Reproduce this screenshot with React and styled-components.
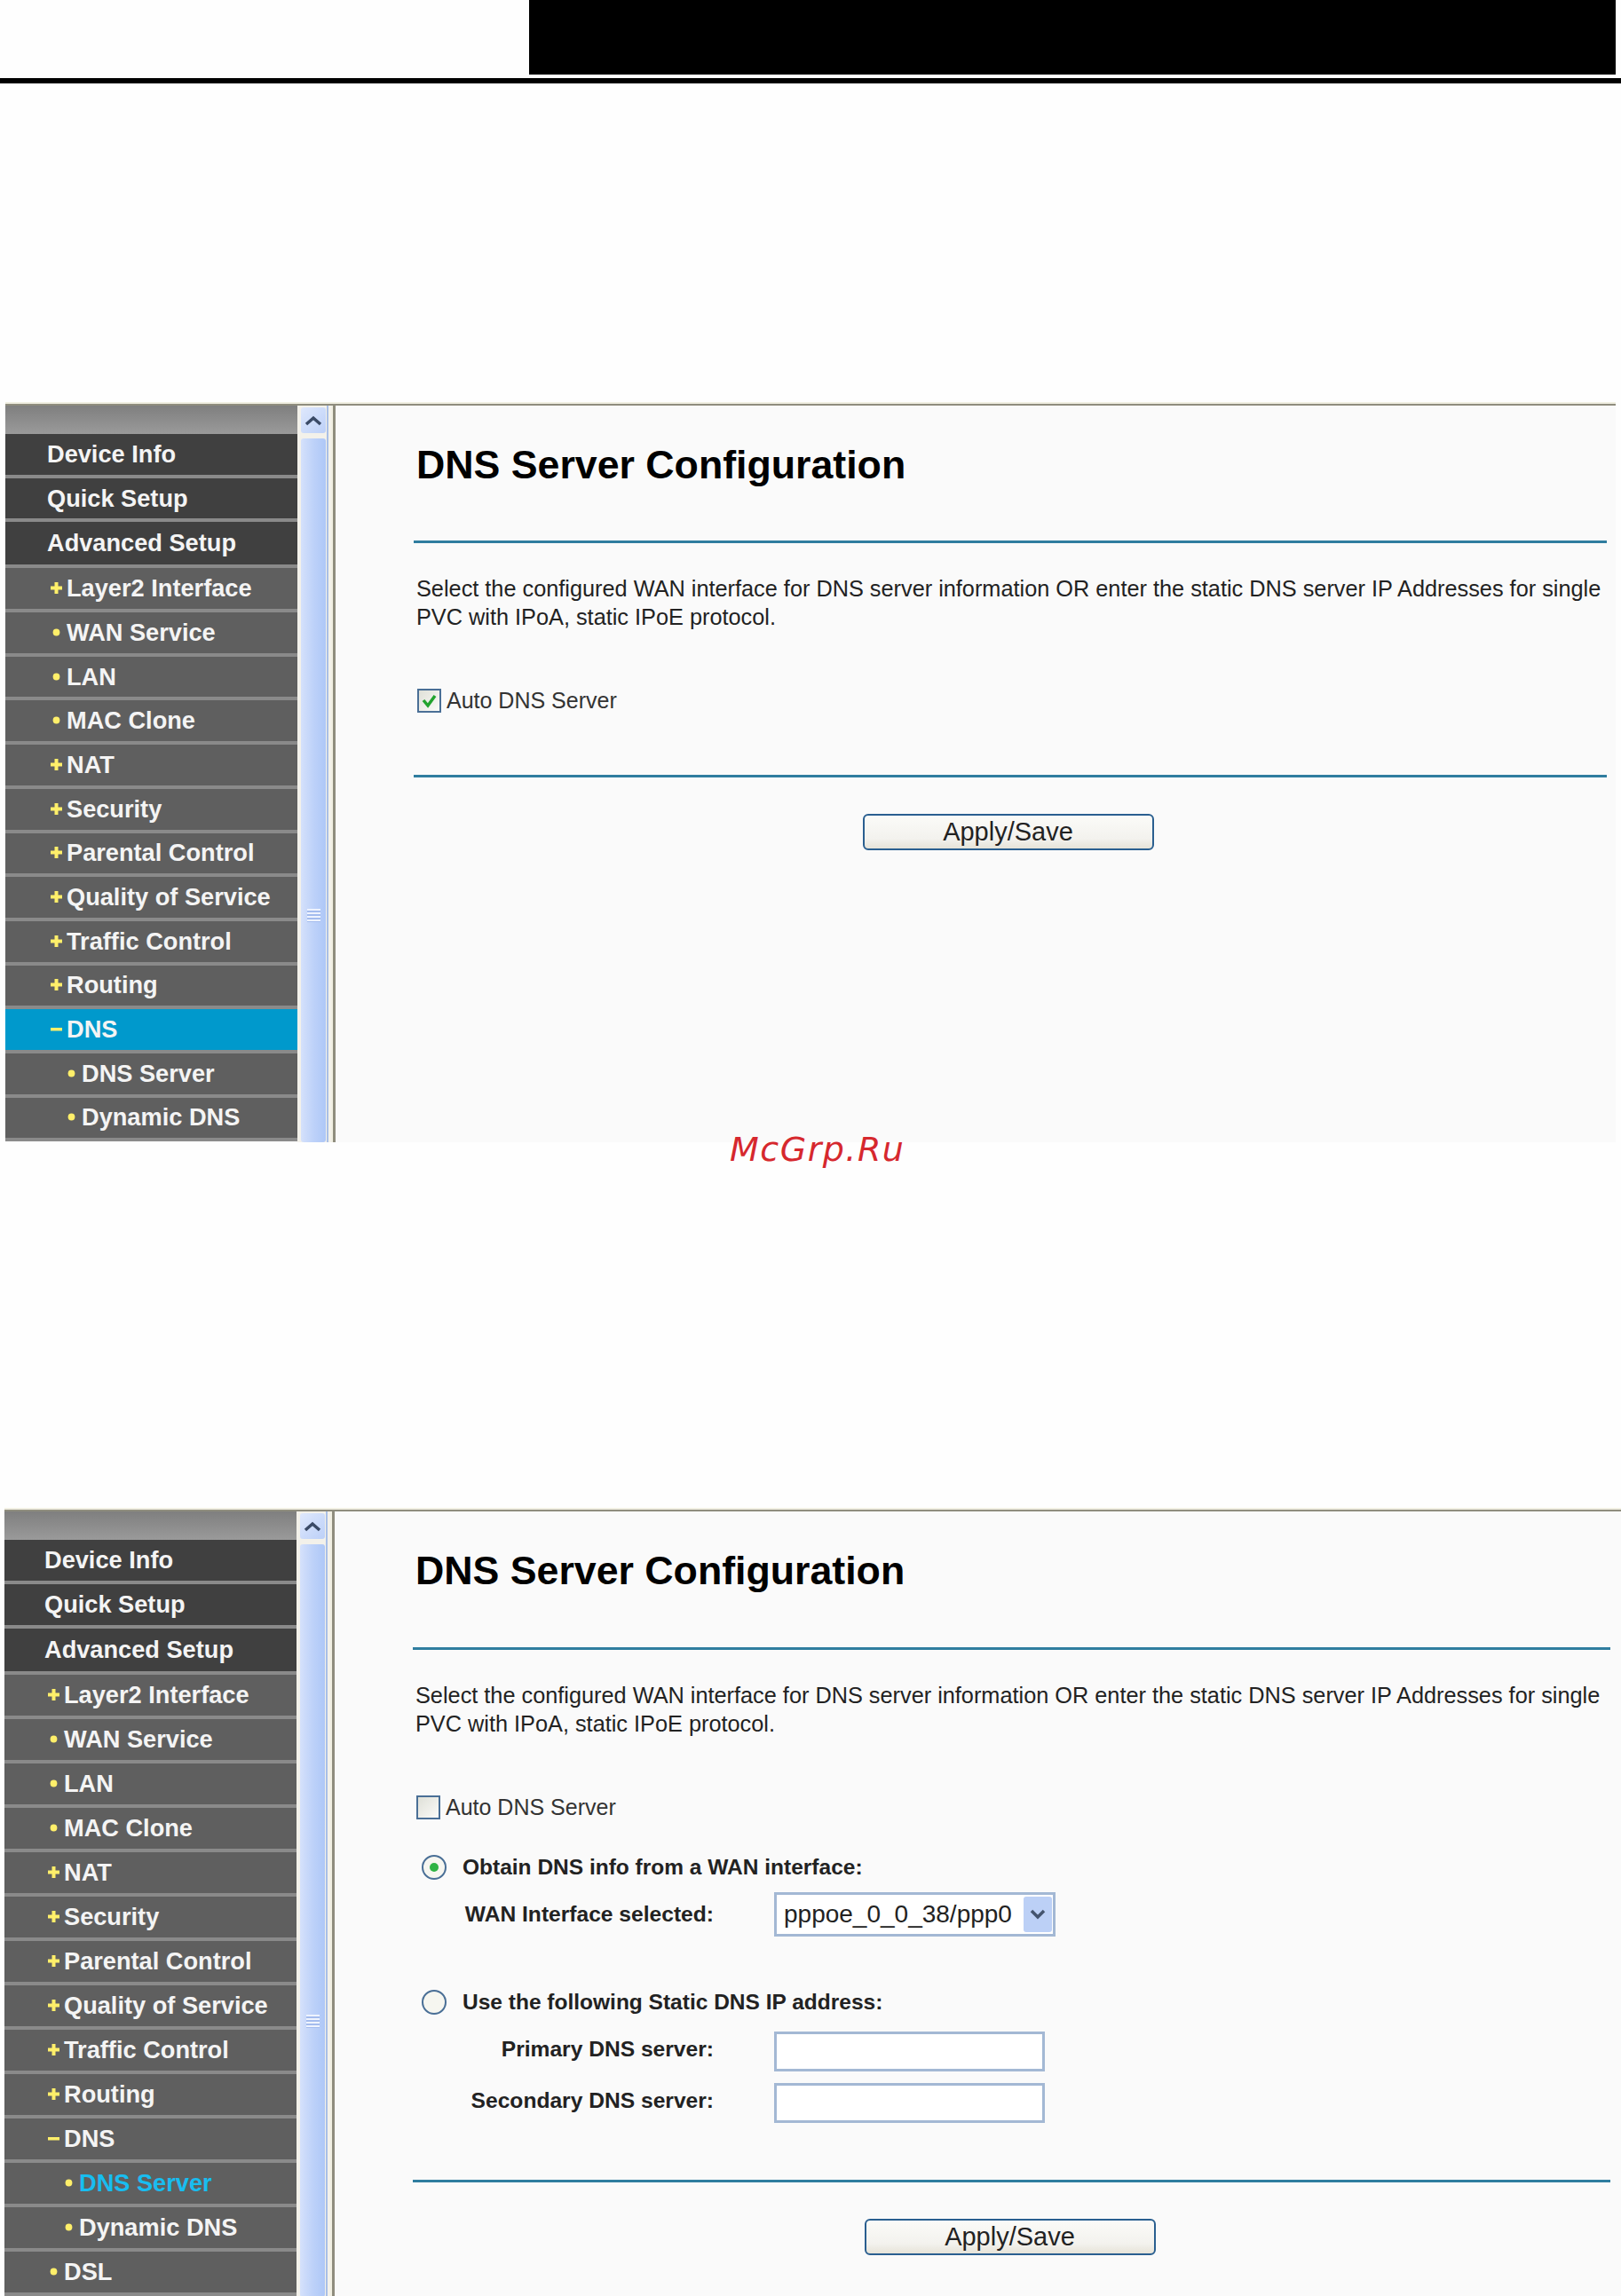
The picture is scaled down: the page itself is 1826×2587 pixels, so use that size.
import React from 'react';
import styled, { createGlobalStyle } from 'styled-components';

const GlobalStyle = createGlobalStyle`
* {
  box-sizing: border-box;
}
body {
  margin: 0;
  background: #fefefe;
  font-family: "Liberation Sans", Arial, sans-serif;
}
`;

const Page = styled.div`
  width: 1826px;
  height: 2587px;
  overflow: hidden;
  display: flex;
  flex-direction: column;
`;

const PageHeader = styled.div`
  height: 94px;
  border-bottom: 6px solid #000;
  padding: 0 6px 4px 596px;
`;

const HeaderBlock = styled.div`
  height: 84px;
  background: #000;
`;

const Shot = styled.div`
  margin-top: ${p => p.$top}px;
  margin-left: ${p => p.$left}px;
  width: ${p => p.$width}px;
  height: ${p => p.$height}px;
  flex: none;
  display: flex;
  overflow: hidden;
  background: linear-gradient(#f1efe2 0 2px, #8f8d7e 2px 4px, #fafafa 4px);
  padding-top: 4px;
`;

const Sidebar = styled.div`
  --nudge: ${p => p.$nudge}px;
  --row: ${p => p.$row}px;
  width: 329px;
  flex: none;
  display: flex;
  flex-direction: column;
`;

const SidebarTop = styled.div`
  height: 32px;
  flex: none;
  background: linear-gradient(#7f7f7f, #9a9a9a);
`;

const MenuRow = styled.div`
  height: ${p => (p.$h ? `${p.$h}px` : 'var(--row)')};
  flex: none;
  display: flex;
  align-items: center;
  background: ${p => (p.$active ? '#0099cc' : p.$top ? '#404040' : '#5f5f5f')};
  border-bottom: 4px solid #8a8a8a;
  padding-left: calc(${p => (p.$top ? 47 : p.$deep ? 68 : 51)}px + var(--nudge));
  color: ${p => (p.$current ? '#18bdf0' : '#f4f4f4')};
  font-size: 27.2px;
  font-weight: 700;
  white-space: nowrap;
`;

const Marker = styled.svg`
  width: 13px;
  height: 13px;
  flex: none;
  margin-right: 5px;
  margin-top: -1px;
`;

const ScrollBar = styled.div`
  width: 38px;
  flex: none;
  background: linear-gradient(90deg, #f3f1ea 0 33px, #a9bfe6 33px 35px, #f3f1ea 35px);
  padding: 2px 6px 0 4px;
  display: flex;
  flex-direction: column;
  gap: 6px;
`;

const ScrollUp = styled.div`
  height: 29px;
  flex: none;
  border-radius: 3px;
  background: linear-gradient(135deg, #dfe8fc, #bcd0f8);
  display: flex;
  align-items: center;
  justify-content: center;
`;

const ScrollThumb = styled.div`
  flex: 1;
  border-radius: 3px;
  background: linear-gradient(90deg, #d5e1fb, #bed2f9 50%, #aec7f7);
  display: flex;
  justify-content: center;
  padding-top: 530px;
`;

const Grip = styled.div`
  width: 15px;
  height: 15px;
  background: repeating-linear-gradient(#eef3fe 0 2px, #a4bcee 2px 4px);
`;

const Divider = styled.div`
  width: 7px;
  flex: none;
  background: linear-gradient(90deg, #f1efe2 0 2px, #8f8d7e 2px 5px, #fafafa 5px);
`;

const Content = styled.div`
  flex: 1;
  min-width: 0;
  display: flex;
  flex-direction: column;
  padding-left: 86px;
  padding-right: ${p => p.$right}px;
  color: #222;
`;

const Title = styled.h1`
  margin: 41px 0 0 3px;
  font-size: 44.7px;
  line-height: 52px;
  font-weight: 700;
  color: #000;
  white-space: nowrap;
`;

const Rule = styled.div`
  height: 3px;
  flex: none;
  background: #2f7d9f;
  margin-top: ${p => p.$top}px;
`;

const Intro = styled.p`
  margin: 35px 0 0 3px;
  font-size: 25.3px;
  line-height: 32px;
  color: #222;
`;

const CheckRow = styled.label`
  display: flex;
  align-items: center;
  gap: 6px;
  margin: 63px 0 0 4px;
  font-size: 25px;
  line-height: 30px;
  color: #333;
`;

const CheckBox = styled.span`
  width: 27px;
  height: 27px;
  flex: none;
  border: 2px solid #4a6f96;
  background: linear-gradient(135deg, #dfe0d8, #fbfbf8);
  display: flex;
  align-items: center;
  justify-content: center;
`;

const Apply = styled.button`
  align-self: center;
  width: 328px;
  height: 41px;
  margin-top: 41px;
  margin-left: ${p => p.$shift}px;
  padding: 0;
  border: 2.5px solid #2a5f90;
  border-radius: 6px;
  background: linear-gradient(#fbfbf8, #f3f2ee 70%, #e6e3d8);
  font-family: inherit;
  font-size: 29px;
  color: #222;
`;

const RadioRow = styled.div`
  display: flex;
  align-items: center;
  gap: 18px;
  margin: ${p => p.$top}px 0 0 10px;
  font-size: 24.5px;
  font-weight: 700;
  color: #222;
`;

const Radio = styled.span`
  width: 28px;
  height: 28px;
  flex: none;
  border-radius: 50%;
  border: 2px solid #4a6f96;
  background: #f6f6f0;
  display: flex;
  align-items: center;
  justify-content: center;
  &::after {
    content: "";
    width: 10px;
    height: 10px;
    border-radius: 50%;
    background: ${p => (p.$on ? '#2fb344' : 'transparent')};
  }
`;

const FieldRow = styled.div`
  display: grid;
  grid-template-columns: 339px auto;
  column-gap: 68px;
  align-items: center;
  margin-top: ${p => p.$top}px;
`;

const FieldLabel = styled.div`
  text-align: right;
  font-size: 24.6px;
  font-weight: 700;
  color: #222;
  white-space: nowrap;
  margin-bottom: ${p => (p.$lift ? 6 : 0)}px;
`;

const Select = styled.div`
  width: 317px;
  height: 50px;
  border: 3px solid #a3b8d4;
  background: #fff;
  display: flex;
  align-items: center;
  padding: 0 1px 0 8px;
  font-size: 28px;
  color: #222;
`;

const SelectText = styled.span`
  flex: 1;
  white-space: nowrap;
`;

const SelectArrow = styled.span`
  width: 32px;
  height: 40px;
  flex: none;
  border-radius: 3px;
  background: #bcd0f6;
  display: flex;
  align-items: center;
  justify-content: center;
`;

const TextField = styled.div`
  width: 305px;
  height: 45px;
  border: 3px solid #a3b8d4;
  background: #fff;
`;

const Watermark = styled.div`
  position: relative;
  margin-top: -11px;
  height: 38px;
  padding-left: 822px;
  font-family: "DejaVu Sans", sans-serif;
  font-style: italic;
  font-size: 38px;
  line-height: 38px;
  letter-spacing: 1.5px;
  color: #d6282e;
`;

function MenuMarker({ kind }) {
  return (
    <Marker viewBox="0 0 13 13">
      {kind === 'plus' && <path d="M4.500 0h4v4.500H13v4H8.500V13h-4V8.500H0v-4h4.500z" fill="#ffef6a" />}
      {kind === 'minus' && <rect x="0" y="5" width="13" height="3.500" fill="#ffef6a" />}
      {kind === 'dot' && <circle cx="6.500" cy="6.500" r="3.900" fill="#ffef6a" />}
    </Marker>
  );
}

function Menu({ activeDns, currentServer, withDsl, nudge, row }) {
  return (
    <Sidebar $nudge={nudge} $row={row}>
      <SidebarTop />
      <MenuRow $top>Device Info</MenuRow>
      <MenuRow $top>Quick Setup</MenuRow>
      <MenuRow $top $h={52}>Advanced Setup</MenuRow>
      <MenuRow><MenuMarker kind="plus" />Layer2 Interface</MenuRow>
      <MenuRow><MenuMarker kind="dot" />WAN Service</MenuRow>
      <MenuRow><MenuMarker kind="dot" />LAN</MenuRow>
      <MenuRow><MenuMarker kind="dot" />MAC Clone</MenuRow>
      <MenuRow><MenuMarker kind="plus" />NAT</MenuRow>
      <MenuRow><MenuMarker kind="plus" />Security</MenuRow>
      <MenuRow><MenuMarker kind="plus" />Parental Control</MenuRow>
      <MenuRow><MenuMarker kind="plus" />Quality of Service</MenuRow>
      <MenuRow><MenuMarker kind="plus" />Traffic Control</MenuRow>
      <MenuRow><MenuMarker kind="plus" />Routing</MenuRow>
      <MenuRow $active={activeDns}><MenuMarker kind="minus" />DNS</MenuRow>
      <MenuRow $deep $current={currentServer}><MenuMarker kind="dot" />DNS Server</MenuRow>
      <MenuRow $deep><MenuMarker kind="dot" />Dynamic DNS</MenuRow>
      {withDsl && <MenuRow><MenuMarker kind="dot" />DSL</MenuRow>}
    </Sidebar>
  );
}

function Scroller() {
  return (
    <ScrollBar>
      <ScrollUp>
        <svg width="20" height="12" viewBox="0 0 20 12">
          <path d="M2 10l8-7 8 7" fill="none" stroke="#3a4a66" strokeWidth="3.500" />
        </svg>
      </ScrollUp>
      <ScrollThumb><Grip /></ScrollThumb>
    </ScrollBar>
  );
}

const INTRO = 'Select the configured WAN interface for DNS server information OR enter the static DNS server IP Addresses for single PVC with IPoA, static IPoE protocol.';

export default function App() {
  return (
    <Page>
      <GlobalStyle />
      <PageHeader><HeaderBlock /></PageHeader>

      <Shot $top={359} $left={6} $width={1814} $height={834}>
        <Menu activeDns nudge={0} row={49.7} />
        <Scroller />
        <Divider />
        <Content $right={10}>
          <Title>DNS Server Configuration</Title>
          <Rule $top={59} />
          <Intro>{INTRO}</Intro>
          <CheckRow>
            <CheckBox>
              <svg width="19" height="19" viewBox="0 0 19 19">
                <path d="M3 9l5 6 8-11" fill="none" stroke="#22a32e" strokeWidth="3.500" />
              </svg>
            </CheckBox>
            Auto DNS Server
          </CheckRow>
          <Rule $top={69} />
          <Apply $shift={-5}>Apply/Save</Apply>
        </Content>
      </Shot>

      <Watermark>McGrp.Ru</Watermark>

      <Shot $top={385} $left={5} $width={1821} $height={889}>
        <Menu currentServer withDsl nudge={-2} row={50} />
        <Scroller />
        <Divider />
        <Content $right={12}>
          <Title>DNS Server Configuration</Title>
          <Rule $top={60} />
          <Intro>{INTRO}</Intro>
          <CheckRow>
            <CheckBox />
            Auto DNS Server
          </CheckRow>
          <RadioRow $top={39}><Radio $on />Obtain DNS info from a WAN interface:</RadioRow>
          <FieldRow $top={14}>
            <FieldLabel>WAN Interface selected:</FieldLabel>
            <Select>
              <SelectText>pppoe_0_0_38/ppp0</SelectText>
              <SelectArrow>
                <svg width="18" height="12" viewBox="0 0 18 12">
                  <path d="M2 2l7 7 7-7" fill="none" stroke="#44546e" strokeWidth="3.500" />
                </svg>
              </SelectArrow>
            </Select>
          </FieldRow>
          <RadioRow $top={60}><Radio />Use the following Static DNS IP address:</RadioRow>
          <FieldRow $top={19}>
            <FieldLabel $lift>Primary DNS server:</FieldLabel>
            <TextField />
          </FieldRow>
          <FieldRow $top={13}>
            <FieldLabel $lift>Secondary DNS server:</FieldLabel>
            <TextField />
          </FieldRow>
          <Rule $top={64} />
          <Apply $shift={-4}>Apply/Save</Apply>
        </Content>
      </Shot>
    </Page>
  );
}
